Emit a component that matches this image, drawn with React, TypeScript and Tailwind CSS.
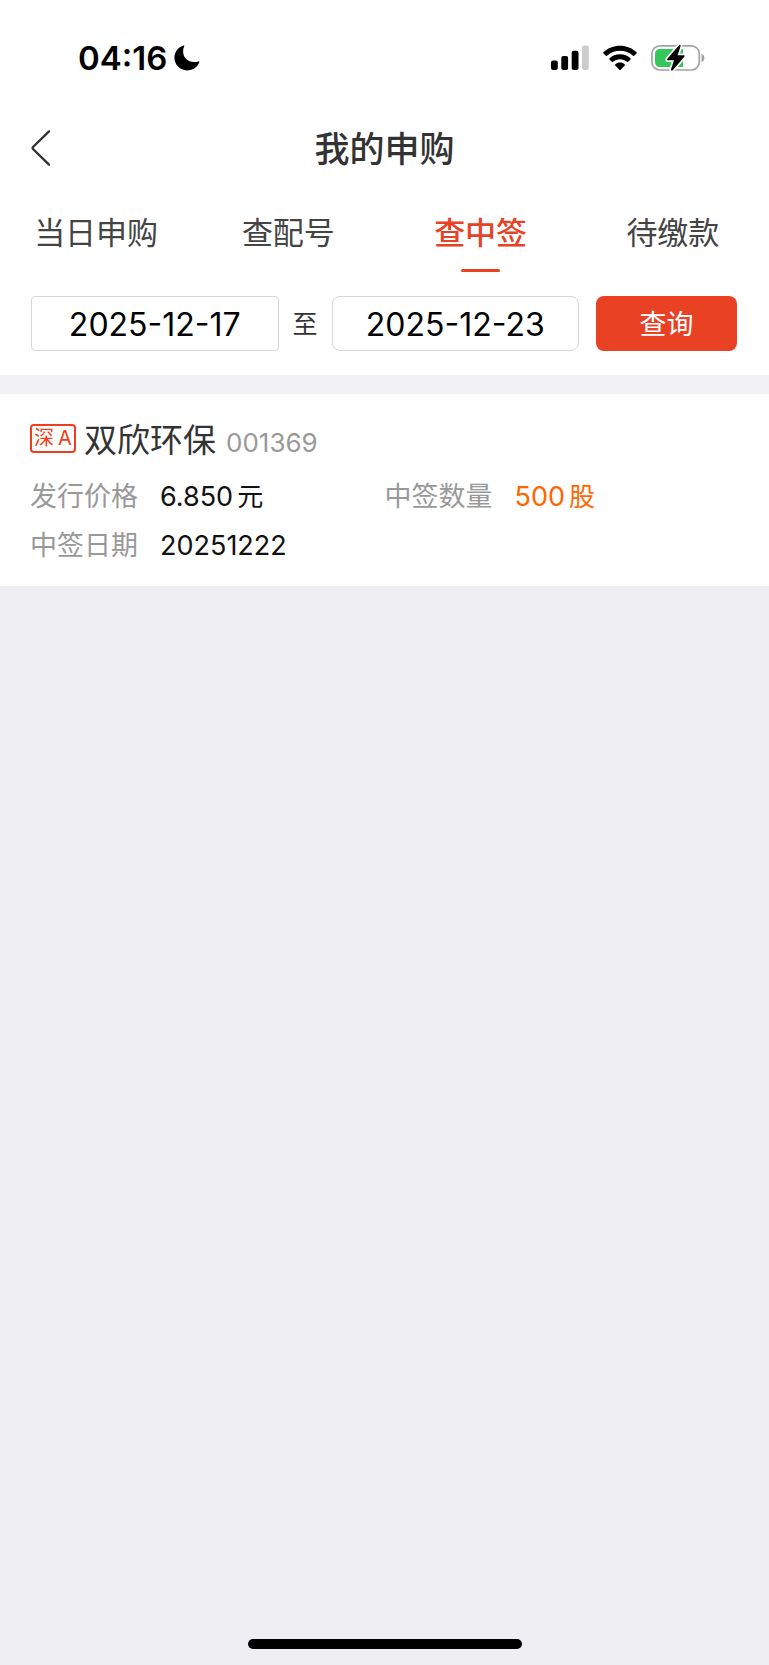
import React, { useState } from 'react';

interface Subscription {
  market: string;
  name: string;
  code: string;
  price: string;
  quantity: string;
  date: string;
}

const tabs = ['当日申购', '查配号', '查中签', '待缴款'];

const records: Subscription[] = [
  {
    market: '深A',
    name: '双欣环保',
    code: '001369',
    price: '6.850',
    quantity: '500',
    date: '20251222'
  }
];

const StatusBar: React.FC = () => (
  <div className="flex h-[115px] items-center justify-between pl-[78px] pr-[64px]">
    <div className="flex items-center gap-[7px]">
      <span className="text-[33px] font-semibold leading-[40px] text-black">04:16</span>
      <svg className="h-[26px] w-[26px]" viewBox="0 0 26 26" aria-hidden="true">
        <path d="M9.6 0.4C4.2 2 0.4 7 0.4 12.6C0.4 19.8 6 25.4 13.2 25.4C18.6 25.4 23.4 22.2 25.3 17.2C25.5 16.6 25 16.2 24.4 16.4C23 16.9 21.6 17.1 20.1 17.1C13.6 17.1 9.1 12.7 9.1 6.3C9.1 4.6 9.5 2.8 10.2 1.3C10.5 0.7 10.2 0.2 9.6 0.4Z" />
      </svg>
    </div>
    <div className="flex items-center gap-[14px]">
      <svg className="h-[26px] w-[38px]" viewBox="0 0 38 26" aria-hidden="true">
        <rect x="0" y="15.5" width="6.8" height="9.5" rx="2" />
        <rect x="10.3" y="11" width="6.8" height="14" rx="2" />
        <rect x="20.7" y="5.8" width="6.8" height="19.2" rx="2" />
        <rect x="31" y="0.5" width="6.8" height="24.5" rx="2" fill="#cccccc" />
      </svg>
      <svg className="h-[26px] w-[34px]" viewBox="0 0 34 26" aria-hidden="true">
        <path d="M17 0.7C23.3 0.7 29.1 3.1 33.4 7.1C33.8 7.5 33.8 8 33.5 8.4L31.2 10.7C30.8 11 30.4 11 30 10.7C26.5 7.5 21.9 5.8 17 5.8C12.1 5.8 7.5 7.5 4 10.7C3.6 11 3.2 11 2.8 10.7L0.5 8.4C0.2 8 0.2 7.5 0.6 7.1C4.9 3.1 10.7 0.7 17 0.7Z" />
        <path d="M17 9.2C21 9.2 24.7 10.7 27.5 13.2C27.9 13.6 27.9 14.1 27.5 14.5L25.2 16.8C24.8 17.1 24.4 17.1 24 16.8C22.1 15.1 19.7 14.2 17 14.2C14.3 14.2 11.9 15.1 10 16.8C9.6 17.1 9.2 17.1 8.8 16.8L6.5 14.5C6.1 14.1 6.1 13.6 6.5 13.2C9.3 10.7 13 9.2 17 9.2Z" />
        <path d="M17 17.6C18.9 17.6 20.5 18.3 21.7 19.3C22.1 19.7 22.1 20.2 21.7 20.6L17.7 24.7C17.3 25.1 16.7 25.1 16.3 24.7L12.3 20.6C11.9 20.2 11.9 19.7 12.3 19.3C13.5 18.3 15.1 17.6 17 17.6Z" />
      </svg>
      <svg className="h-[28px] w-[54px]" viewBox="0 0 54 28" aria-hidden="true">
        <rect x="0.9" y="1.8" width="47.4" height="24.2" rx="8" fill="none" stroke="#a3a3a3" strokeWidth="1.7" />
        <path d="M50.5 9.8C52.3 10.5 53.4 12 53.4 13.9C53.4 15.8 52.3 17.3 50.5 18Z" fill="#a3a3a3" />
        <path d="M9 5H32V23H9C6 23 4 21 4 18V10C4 7 6 5 9 5Z" fill="#34c759" />
        <path d="M27.8 1.4L16.4 14.8C15.8 15.6 16.1 16.3 17 16.3H23L20.1 25.1C19.7 26.7 21 27.3 22 26.1L33.3 12.8C33.9 12 33.5 11.3 32.6 11.3H26.6L29.5 2.6C30 1 28.8 0.3 27.8 1.4Z" fill="#000" stroke="#fff" strokeWidth="3.4" paintOrder="stroke" />
      </svg>
    </div>
  </div>
);

const RecordCard: React.FC<{ record: Subscription }> = ({ record }) => (
  <article className="bg-white px-[30px] pb-4 pt-[18px]">
    <div className="flex items-center">
      <span className="flex h-[29px] w-[46px] items-center justify-center gap-1 rounded-[4px] border-2 border-[#f03c20] text-[20px] leading-[24px] text-[#f03c20]">
        <span>{record.market.slice(0, 1)}</span>
        <span>{record.market.slice(1)}</span>
      </span>
      <h2 className="ml-2 pt-1 text-[33px] leading-[48px] text-[#333333]">{record.name}</h2>
      <span className="ml-[10px] pt-[10px] text-[26px] leading-[40px] text-[#999999]">{record.code}</span>
    </div>
    <dl className="mt-2 grid grid-cols-2 text-[27px] leading-[49px]">
      <div className="flex gap-[22px]">
        <dt className="text-[#999999]">发行价格</dt>
        <dd className="flex gap-1 text-[#111111]">
          <span>{record.price}</span>
          <span className="text-[26px]">元</span>
        </dd>
      </div>
      <div className="flex gap-[22px]">
        <dt className="text-[#999999]">中签数量</dt>
        <dd className="flex gap-1 text-[#ff6600]">
          <span>{record.quantity}</span>
          <span className="text-[26px]">股</span>
        </dd>
      </div>
      <div className="flex gap-[22px]">
        <dt className="text-[#999999]">中签日期</dt>
        <dd className="text-[#111111]">{record.date}</dd>
      </div>
    </dl>
  </article>
);

const App: React.FC = () => {
  const [activeTab, setActiveTab] = useState('查中签');
  const [startDate, setStartDate] = useState('2025-12-17');
  const [endDate, setEndDate] = useState('2025-12-23');

  return (
    <div className="flex min-h-screen flex-col bg-[#efeef3] font-[Inter,'Noto_Sans_CJK_SC',sans-serif]">
      <div className="bg-white">
        <StatusBar />

        <header className="grid h-[66px] grid-cols-[60px_1fr_60px] items-center px-[18px]">
          <button type="button" aria-label="返回" className="flex h-[60px] items-center pl-3">
            <svg className="h-[38px] w-[22px]" viewBox="0 0 22 38" fill="none" stroke="#333333" strokeWidth="2.4" strokeLinecap="round" strokeLinejoin="round" aria-hidden="true">
              <path d="M19 2.4L3 18Q2 19 3 20L19 35.6" />
            </svg>
          </button>
          <h1 className="pt-[2px] text-center text-[35px] font-medium leading-[48px] text-[#333333]">我的申购</h1>
        </header>

        <nav className="grid h-[92px] grid-cols-4">
          {tabs.map((tab) => (
            <button
              key={tab}
              type="button"
              onClick={() => setActiveTab(tab)}
              className={`flex flex-col items-center pt-7 text-[31px] leading-[48px] ${
                activeTab === tab ? 'font-medium text-[#e84124]' : 'text-[#444444]'
              }`}
            >
              {tab}
              {activeTab === tab && <span className="mt-3 h-[3px] w-[39px] rounded-full bg-[#e84124]" />}
            </button>
          ))}
        </nav>

        <form className="flex items-center pb-6 pl-[31px] pr-8 pt-[23px]" onSubmit={(e) => e.preventDefault()}>
          <input
            type="text"
            aria-label="开始日期"
            value={startDate}
            onChange={(e) => setStartDate(e.target.value)}
            className="h-[55px] min-w-0 flex-1 rounded-[4px] border border-[#d6d6d6] pt-[2px] text-center text-[32px] text-black"
          />
          <span className="mx-[14px] text-[25px] leading-[40px] text-[#333333]">至</span>
          <input
            type="text"
            aria-label="结束日期"
            value={endDate}
            onChange={(e) => setEndDate(e.target.value)}
            className="h-[55px] min-w-0 flex-1 rounded-[8px] border border-[#d6d6d6] pt-[2px] text-center text-[32px] text-black"
          />
          <button type="submit" className="ml-[17px] h-[55px] w-[141px] rounded-[8px] bg-[#e84124] pt-1 text-[27px] text-white">
            查询
          </button>
        </form>
      </div>

      <div className="h-[19px] bg-[#f2f2f4]" />

      <main>
        {records.map((record) => (
          <RecordCard key={record.code} record={record} />
        ))}
      </main>

      <div className="mt-auto flex justify-center pb-4">
        <div className="h-[10px] w-[274px] rounded-full bg-black" />
      </div>
    </div>
  );
};

export default App;
